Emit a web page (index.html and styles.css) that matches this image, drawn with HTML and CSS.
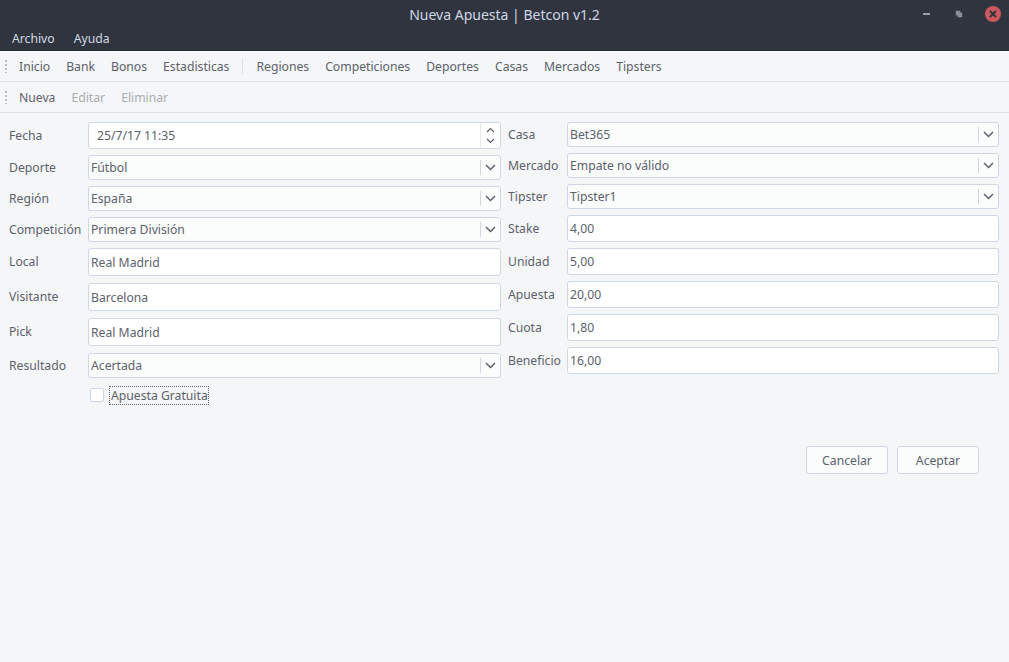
FILE: index.html
```html
<!DOCTYPE html>
<html lang="es">
<head>
<meta charset="utf-8">
<title>Nueva Apuesta | Betcon v1.2</title>
<link rel="stylesheet" href="styles.css">
</head>
<body>
<div class="window">
  <header class="titlebar">
    <div class="title-row">
      <span class="title">Nueva Apuesta | Betcon v1.2</span>
      <div class="controls">
        <span class="ctl-min"></span>
        <svg class="ctl-max" width="10" height="10" viewBox="0 0 10 10"><path d="M2 5 L2 2 L5 2 Z M8 5 L8 8 L5 8 Z M3 7 L7 3" stroke="#8a8f99" stroke-width="2" fill="#8a8f99"/></svg>
        <svg class="ctl-close" width="16" height="16" viewBox="0 0 16 16"><circle cx="8" cy="8" r="8" fill="#cc575d"/><path d="M5 5 L11 11 M11 5 L5 11" stroke="#2f343f" stroke-width="2"/></svg>
      </div>
    </div>
    <nav class="menubar">
      <span class="menu-item">Archivo</span>
      <span class="menu-item">Ayuda</span>
    </nav>
  </header>

  <div class="toolbar">
    <span class="handle"></span>
    <span class="tb-item">Inicio</span>
    <span class="tb-item">Bank</span>
    <span class="tb-item">Bonos</span>
    <span class="tb-item">Estadisticas</span>
    <span class="tb-sep"></span>
    <span class="tb-item">Regiones</span>
    <span class="tb-item">Competiciones</span>
    <span class="tb-item">Deportes</span>
    <span class="tb-item">Casas</span>
    <span class="tb-item">Mercados</span>
    <span class="tb-item">Tipsters</span>
  </div>
  <div class="toolbar">
    <span class="handle"></span>
    <span class="tb-item">Nueva</span>
    <span class="tb-item disabled">Editar</span>
    <span class="tb-item disabled">Eliminar</span>
  </div>

  <main class="content">
    <div class="form">
      <div class="col col-left">
        <div class="row h27"><label class="lbl">Fecha</label>
          <div class="field spin"><span class="val">25/7/17 11:35</span>
            <span class="spin-btns">
              <svg width="9" height="6" viewBox="0 0 9 6"><path d="M1 5 L4.5 1.5 L8 5" stroke="#5c616c" stroke-width="1.2" fill="none"/></svg>
              <svg width="9" height="6" viewBox="0 0 9 6"><path d="M1 1 L4.5 4.5 L8 1" stroke="#5c616c" stroke-width="1.2" fill="none"/></svg>
            </span>
          </div>
        </div>
        <div class="row h25"><label class="lbl">Deporte</label>
          <div class="field combo"><span class="val">Fútbol</span><span class="arrow"><svg width="11" height="7" viewBox="0 0 11 7"><path d="M1 1 L5.5 5.5 L10 1" stroke="#5c616c" stroke-width="1.5" fill="none"/></svg></span></div>
        </div>
        <div class="row h25"><label class="lbl">Región</label>
          <div class="field combo"><span class="val">España</span><span class="arrow"><svg width="11" height="7" viewBox="0 0 11 7"><path d="M1 1 L5.5 5.5 L10 1" stroke="#5c616c" stroke-width="1.5" fill="none"/></svg></span></div>
        </div>
        <div class="row h25"><label class="lbl">Competición</label>
          <div class="field combo"><span class="val">Primera División</span><span class="arrow"><svg width="11" height="7" viewBox="0 0 11 7"><path d="M1 1 L5.5 5.5 L10 1" stroke="#5c616c" stroke-width="1.5" fill="none"/></svg></span></div>
        </div>
        <div class="row h28 mb1"><label class="lbl">Local</label>
          <div class="field edit"><span class="val">Real Madrid</span></div>
        </div>
        <div class="row h28 mb1"><label class="lbl">Visitante</label>
          <div class="field edit"><span class="val">Barcelona</span></div>
        </div>
        <div class="row h28 mb1"><label class="lbl">Pick</label>
          <div class="field edit"><span class="val">Real Madrid</span></div>
        </div>
        <div class="row h25"><label class="lbl">Resultado</label>
          <div class="field combo"><span class="val">Acertada</span><span class="arrow"><svg width="11" height="7" viewBox="0 0 11 7"><path d="M1 1 L5.5 5.5 L10 1" stroke="#5c616c" stroke-width="1.5" fill="none"/></svg></span></div>
        </div>
        <div class="check-row">
          <span class="checkbox"></span>
          <span class="check-label">Apuesta Gratuita</span>
        </div>
      </div>

      <div class="col col-right">
        <div class="row h25"><label class="lbl">Casa</label>
          <div class="field combo"><span class="val">Bet365</span><span class="arrow"><svg width="11" height="7" viewBox="0 0 11 7"><path d="M1 1 L5.5 5.5 L10 1" stroke="#5c616c" stroke-width="1.5" fill="none"/></svg></span></div>
        </div>
        <div class="row h25"><label class="lbl">Mercado</label>
          <div class="field combo"><span class="val">Empate no válido</span><span class="arrow"><svg width="11" height="7" viewBox="0 0 11 7"><path d="M1 1 L5.5 5.5 L10 1" stroke="#5c616c" stroke-width="1.5" fill="none"/></svg></span></div>
        </div>
        <div class="row h25"><label class="lbl">Tipster</label>
          <div class="field combo"><span class="val">Tipster1</span><span class="arrow"><svg width="11" height="7" viewBox="0 0 11 7"><path d="M1 1 L5.5 5.5 L10 1" stroke="#5c616c" stroke-width="1.5" fill="none"/></svg></span></div>
        </div>
        <div class="row h27"><label class="lbl">Stake</label>
          <div class="field edit"><span class="val">4,00</span></div>
        </div>
        <div class="row h27"><label class="lbl">Unidad</label>
          <div class="field edit"><span class="val">5,00</span></div>
        </div>
        <div class="row h27"><label class="lbl">Apuesta</label>
          <div class="field edit"><span class="val">20,00</span></div>
        </div>
        <div class="row h27"><label class="lbl">Cuota</label>
          <div class="field edit"><span class="val">1,80</span></div>
        </div>
        <div class="row h27"><label class="lbl">Beneficio</label>
          <div class="field edit"><span class="val">16,00</span></div>
        </div>
      </div>
    </div>

    <div class="buttons">
      <button class="btn">Cancelar</button>
      <button class="btn">Aceptar</button>
    </div>
  </main>
</div>
</body>
</html>
```

FILE: styles.css
```css
* { box-sizing: border-box; }

html, body {
  margin: 0;
  padding: 0;
  height: 100%;
}

body {
  font-family: "Noto Sans", "Open Sans", sans-serif;
  font-size: 12.2px;
  color: #5c616c;
  background: #f5f6f7;
}

.window {
  width: 1009px;
  height: 662px;
  display: flex;
  flex-direction: column;
  background: #f5f6f7;
}

.titlebar {
  background: #2f343f;
  height: 51px;
  border-bottom: 1px solid #262a33;
  display: flex;
  flex-direction: column;
}

.title-row {
  height: 28px;
  display: flex;
  align-items: center;
  justify-content: center;
  position: relative;
}

.title {
  color: #cfd6e6;
  font-size: 14px;
  line-height: 1;
  margin-top: 1px;
}

.controls {
  position: absolute;
  right: 8px;
  top: 6px;
  display: flex;
  align-items: center;
}

.ctl-min {
  display: block;
  width: 7px;
  height: 2px;
  background: #9a9fa8;
  margin-right: 25px;
}

.ctl-max {
  margin-right: 22px;
  width: 8px;
  height: 8px;
}

.ctl-close {
  display: block;
}

.menubar {
  display: flex;
  align-items: center;
  height: 22px;
  padding-left: 4px;
}

.menu-item {
  color: #d3dae3;
  padding: 0 8px;
  font-size: 12.2px;
  line-height: 22px;
}

.menu-item + .menu-item {
  margin-left: 3px;
}

.toolbar {
  height: 31px;
  border-bottom: 1px solid #dcdfe3;
  display: flex;
  align-items: center;
  padding-left: 5px;
}

.handle {
  width: 2px;
  height: 14px;
  margin-right: 4px;
  background-image: radial-gradient(circle, #b8bdc6 0.9px, transparent 1.1px);
  background-size: 2px 4px;
  background-repeat: repeat-y;
}

.tb-item {
  padding: 0 8px;
  line-height: 29px;
  color: #5c616c;
}

.tb-item.disabled {
  color: #a9acb2;
}

.tb-sep {
  width: 1px;
  height: 16px;
  background: #dcdfe3;
  margin: 0 5px;
}

.content {
  flex: 1;
  display: flex;
  flex-direction: column;
  padding: 9px 10px 0 9px;
}

.form {
  display: flex;
  gap: 7px;
}

.col {
  display: flex;
  flex-direction: column;
  gap: 6px;
}

.col-left { width: 492px; }
.col-right { flex: 1; }

.row {
  display: flex;
  align-items: center;
}

.h25 { height: 25px; }
.h27 { height: 27px; }
.h28 { height: 28px; }
.mb1 { margin-bottom: 1px; }

.lbl {
  flex: none;
  line-height: 1;
  padding-top: 1px;
}

.col-left .lbl { width: 79px; }
.col-right .lbl { width: 59px; }

.field {
  flex: 1;
  height: 100%;
  border: 1px solid #cfd6e6;
  border-radius: 3px;
  display: flex;
  align-items: center;
  color: #5c616c;
}

.field .val {
  flex: 1;
  padding-left: 2px;
  white-space: nowrap;
}

.edit {
  background: #ffffff;
}

.combo {
  background: #fbfcfc;
}

.combo .arrow {
  flex: none;
  width: 19px;
  height: 15px;
  border-left: 1px solid #cfd6e6;
  display: flex;
  align-items: center;
  justify-content: center;
  margin-right: 1px;
}

.spin {
  background: #ffffff;
}

.spin .val {
  padding-left: 8px;
}

.spin-btns {
  width: 20px;
  height: 100%;
  border-left: 1px solid #e6e9ef;
  display: flex;
  flex-direction: column;
  align-items: center;
  justify-content: space-around;
  padding: 2px 0;
}

.spin-btns svg { display: block; }

.check-row {
  display: flex;
  align-items: center;
  padding-left: 81px;
  margin-top: -1px;
  height: 24px;
}

.checkbox {
  width: 14px;
  height: 14px;
  border: 1px solid #cfd6e6;
  border-radius: 2px;
  background: #ffffff;
  margin-right: 5px;
}

.check-label {
  border: 1px dotted #5c616c;
  padding: 0 0 0 1px;
  line-height: 17px;
}

.buttons {
  display: flex;
  justify-content: flex-end;
  gap: 9px;
  margin-top: 39px;
  padding-right: 20px;
}

.btn {
  font-family: "Noto Sans", "Open Sans", sans-serif;
  font-size: 12.2px;
  color: #5c616c;
  background: #fbfcfc;
  border: 1px solid #cfd6e6;
  border-radius: 3px;
  height: 28px;
  width: 82px;
  padding: 0;
}
```
